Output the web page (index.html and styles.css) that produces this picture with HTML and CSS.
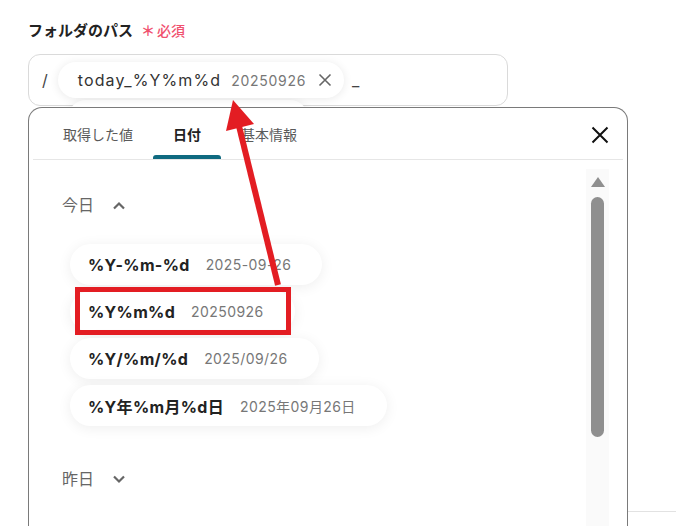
FILE: index.html
```html
<!DOCTYPE html>
<html lang="ja">
<head>
  <meta charset="UTF-8" />
  <meta name="viewport" content="width=device-width, initial-scale=1.0"/>
  <title>フォルダのパス</title>
  <link rel="stylesheet" href="styles.css">
</head>
<body>
  <div class="page">

    <section class="field">
      <div class="field-label">フォルダのパス<span class="req"><span class="req-mark">＊</span>必須</span></div>

      <div class="path-input">
        <span class="sep">/</span>
        <span class="tag">
          <span class="tag-key">today_%Y%m%d</span>
          <span class="tag-val">20250926</span>
          <svg class="tag-del" width="14" height="14" viewBox="0 0 14 14"><path d="M1.5 1.5l11 11M12.5 1.5l-11 11" stroke="#666" stroke-width="1.6" fill="none"/></svg>
        </span>
        <span class="sep under">_</span>
        <span class="tag tag-ghost"></span>
      </div>

      <div class="next-field"></div>

      <!-- ドロップダウン -->
      <div class="picker">
        <div class="picker-head">
          <nav class="tabs">
            <span class="tab">取得した値</span>
            <span class="tab active">日付</span>
            <span class="tab">基本情報</span>
          </nav>
          <button class="close">
            <svg width="18" height="18" viewBox="0 0 18 18"><path d="M1.5 1.5l15 15M16.5 1.5l-15 15" stroke="#111" stroke-width="2" fill="none"/></svg>
          </button>
        </div>

        <div class="picker-body">
          <div class="picker-list">
            <div class="group-head">今日
              <svg class="chev" width="14" height="9" viewBox="0 0 14 9"><path d="M2 7.5l5-5 5 5" stroke="#666" stroke-width="2.2" fill="none"/></svg>
            </div>
            <div class="items">
              <div class="item"><b>%Y-%m-%d</b><span>2025-09-26</span></div>
              <div class="item"><b>%Y%m%d</b><span>20250926</span></div>
              <div class="item"><b>%Y/%m/%d</b><span>2025/09/26</span></div>
              <div class="item"><b>%Y年%m月%d日</b><span>2025年09月26日</span></div>
            </div>
            <div class="group-head closed">昨日
              <svg class="chev" width="14" height="9" viewBox="0 0 14 9"><path d="M2 1.5l5 5 5-5" stroke="#666" stroke-width="2.2" fill="none"/></svg>
            </div>
          </div>
          <div class="scrollbar">
            <span class="scroll-up"></span>
            <span class="scroll-thumb"></span>
          </div>
        </div>
      </div>
    </section>

    <!-- 注釈 -->
    <div class="annot-box"></div>
    <svg class="annot-arrow" width="676" height="526" viewBox="0 0 676 526">
      <line x1="278" y1="285" x2="238" y2="122" stroke="#e31d23" stroke-width="6"/>
      <polygon points="233,100 254,124 226,131" fill="#e31d23"/>
    </svg>

  </div>
</body>
</html>
```

FILE: styles.css
```css
:root {
  --texto: #333;
  --gris: #777;
  --borde: #dadada;
  --rojo-req: #f0506e;
  --rojo-nota: #e31d23;
  --acento: #0f6a80;
  --fuente: 'Inter', 'Noto Sans CJK JP', sans-serif;
}
* { box-sizing: border-box; margin: 0; padding: 0; }
body {
  font-family: var(--fuente);
  background: #fff;
  color: var(--texto);
}
.page {
  position: relative;
  width: 676px;
  height: 526px;
  overflow: hidden;
}

.field {
  position: relative;
  padding: 21px 0 0 28px;
}
.field-label {
  font-size: 15px;
  line-height: 20px;
  font-weight: 700;
  color: #222;
  margin-bottom: 13px;
}
.req {
  color: var(--rojo-req);
  font-size: 14px;
  font-weight: 500;
  margin-left: 8px;
}
.req-mark {
  font-weight: 700;
  margin-right: 2px;
}

.path-input {
  position: relative;
  width: 480px;
  height: 52px;
  border: 1px solid var(--borde);
  border-radius: 12px;
  display: flex;
  align-items: center;
  padding-left: 13px;
}
.sep {
  font-size: 16px;
  color: #444;
}
.sep.under { margin-left: 8px; }
.tag {
  position: relative;
  z-index: 1;
  display: flex;
  align-items: center;
  height: 36px;
  margin-left: 10px;
  padding: 0 12px 0 20px;
  background: #fff;
  border-radius: 18px;
  box-shadow: 0 1px 10px rgba(0,0,0,0.09);
}
.tag-key {
  font-size: 16px;
  letter-spacing: 0.07em;
  color: #333;
}
.tag-val {
  margin-left: 10px;
  font-size: 14px;
  letter-spacing: 0.05em;
  color: var(--gris);
}
.tag-del { margin-left: 12px; }
.tag-ghost {
  position: absolute;
  left: 29px;
  top: 45px;
  width: 240px;
  z-index: 0;
}

.next-field {
  margin-top: 405px;
  height: 40px;
  border-top: 1px solid #e2e2e2;
}

/* Selector flotante */
.picker {
  position: absolute;
  left: 28px;
  top: 107px;
  width: 600px;
  height: 440px;
  z-index: 3;
  background: #fff;
  border: 1px solid #7a7a7a;
  border-bottom: none;
  border-radius: 14px 14px 0 0;
  display: flex;
  flex-direction: column;
}
.picker-head {
  display: flex;
  justify-content: space-between;
  align-items: center;
  height: 52px;
  margin: 0 4px;
  border-bottom: 1px solid #e6e6e6;
}
.tabs {
  display: flex;
  height: 100%;
  padding-left: 10px;
}
.tab {
  position: relative;
  padding: 17px 20px 0;
  font-size: 14px;
  line-height: 20px;
  color: #5a5a5a;
}
.tab.active {
  color: #222;
  font-weight: 700;
}
.tab.active::after {
  content: "";
  position: absolute;
  left: 0;
  right: 0;
  bottom: 0;
  height: 4px;
  border-radius: 3px 3px 0 0;
  background: var(--acento);
}
.close {
  border: none;
  background: none;
  width: 18px;
  height: 18px;
  margin-right: 14px;
  margin-top: 2px;
  cursor: pointer;
}

.picker-body {
  flex: 1;
  display: flex;
  min-height: 0;
}
.picker-list {
  flex: 1;
  padding: 33px 0 0 33px;
}
.group-head {
  display: flex;
  align-items: center;
  font-size: 16px;
  line-height: 24px;
  color: #666;
}
.group-head .chev { margin-left: 18px; }
.group-head.closed { margin-top: 41px; }
.items {
  display: flex;
  flex-direction: column;
  align-items: flex-start;
  gap: 6px;
  margin: 27px 0 0 8px;
}
.item {
  display: flex;
  align-items: center;
  height: 41px;
  padding: 0 31px 0 18px;
  background: #fff;
  border-radius: 21px;
  box-shadow: 0 2px 14px rgba(0,0,0,0.07);
}
.item b {
  font-size: 16px;
  font-weight: 700;
  letter-spacing: 0.02em;
  color: #222;
}
.item span {
  margin-left: 16px;
  font-size: 14px;
  letter-spacing: 0.03em;
  color: var(--gris);
}

.scrollbar {
  width: 23px;
  margin: 9px 18px 0 0;
  background: #fafafa;
  display: flex;
  flex-direction: column;
  align-items: center;
}
.scroll-up {
  width: 0;
  height: 0;
  margin-top: 8px;
  border-left: 7px solid transparent;
  border-right: 7px solid transparent;
  border-bottom: 10px solid #8f8f8f;
}
.scroll-thumb {
  width: 13px;
  height: 240px;
  margin-top: 10px;
  border-radius: 7px;
  background: #8f8f8f;
}

/* Anotaciones */
.annot-box {
  position: absolute;
  left: 75px;
  top: 287px;
  width: 216px;
  height: 48px;
  border: 5px solid var(--rojo-nota);
  z-index: 5;
}
.annot-arrow {
  position: absolute;
  left: 0;
  top: 0;
  z-index: 6;
  pointer-events: none;
}
```
